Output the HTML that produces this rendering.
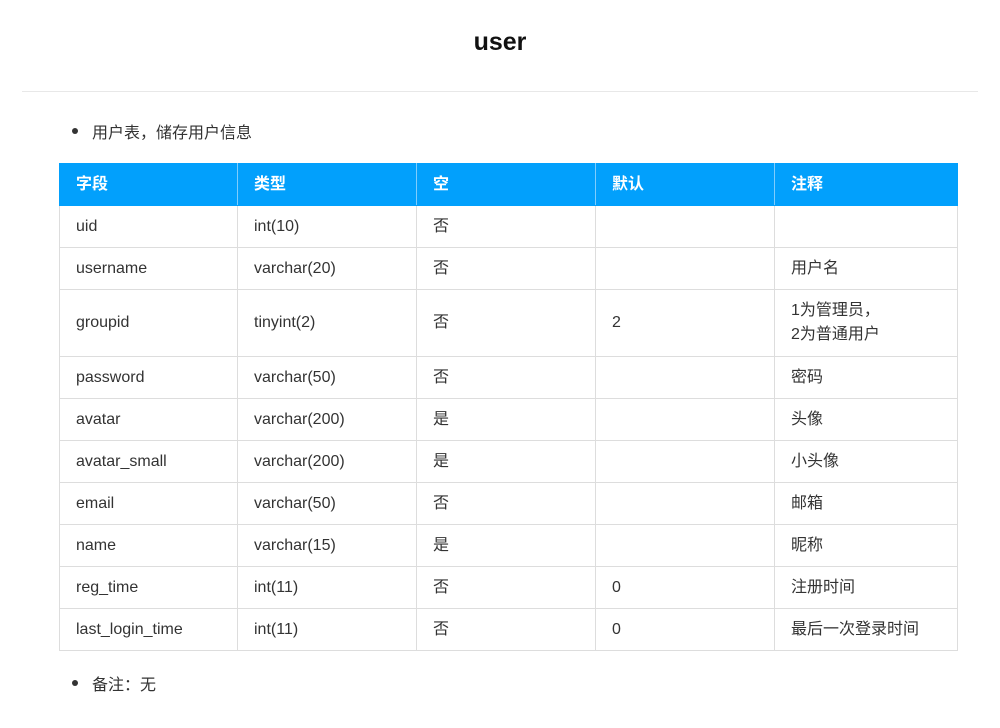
<!DOCTYPE html>
<html><head><meta charset="utf-8"><style>
body{margin:0;background:#fff;width:1000px;height:728px;font-family:"Liberation Sans","Noto Sans CJK SC",sans-serif;color:#333;position:relative;overflow:hidden}
h1{position:absolute;top:28px;left:0;width:1000px;text-align:center;margin:0;font-size:25px;font-weight:bold;color:#111}
.hr{position:absolute;left:22px;top:91px;width:956px;height:1px;background:#e8e8e8}
.li{position:absolute;left:92px;font-size:16px}
.li:before{content:"";position:absolute;left:-20px;top:9px;width:6px;height:6px;border-radius:50%;background:#333}
table{position:absolute;left:59px;top:163px;border-collapse:collapse;font-size:16px}
td,th{border:1px solid #ddd;padding:0 0 0 16px;text-align:left;vertical-align:middle;height:41px;line-height:24px}
th{background:#02a0fc;color:#fff;border-color:#02a0fc;font-weight:bold;border-right:1px solid #7fcdfd}
th:last-child{border-right-color:#02a0fc}
</style></head><body>
<h1>user</h1>
<div class="hr"></div>
<div class="li" style="top:119px">用户表，储存用户信息</div>
<table>
<colgroup><col style="width:178px"><col style="width:179px"><col style="width:179px"><col style="width:179px"><col style="width:183px"></colgroup>
<tr><th>字段</th><th>类型</th><th>空</th><th>默认</th><th>注释</th></tr>
<tr><td>uid</td><td>int(10)</td><td>否</td><td></td><td></td></tr>
<tr><td>username</td><td>varchar(20)</td><td>否</td><td></td><td>用户名</td></tr>
<tr><td style="height:66px">groupid</td><td>tinyint(2)</td><td>否</td><td>2</td><td>1为管理员，<br>2为普通用户</td></tr>
<tr><td>password</td><td>varchar(50)</td><td>否</td><td></td><td>密码</td></tr>
<tr><td>avatar</td><td>varchar(200)</td><td>是</td><td></td><td>头像</td></tr>
<tr><td>avatar_small</td><td>varchar(200)</td><td>是</td><td></td><td>小头像</td></tr>
<tr><td>email</td><td>varchar(50)</td><td>否</td><td></td><td>邮箱</td></tr>
<tr><td>name</td><td>varchar(15)</td><td>是</td><td></td><td>昵称</td></tr>
<tr><td>reg_time</td><td>int(11)</td><td>否</td><td>0</td><td>注册时间</td></tr>
<tr><td>last_login_time</td><td>int(11)</td><td>否</td><td>0</td><td>最后一次登录时间</td></tr>
</table>
<div class="li" style="top:671px">备注：无</div>
</body></html>
